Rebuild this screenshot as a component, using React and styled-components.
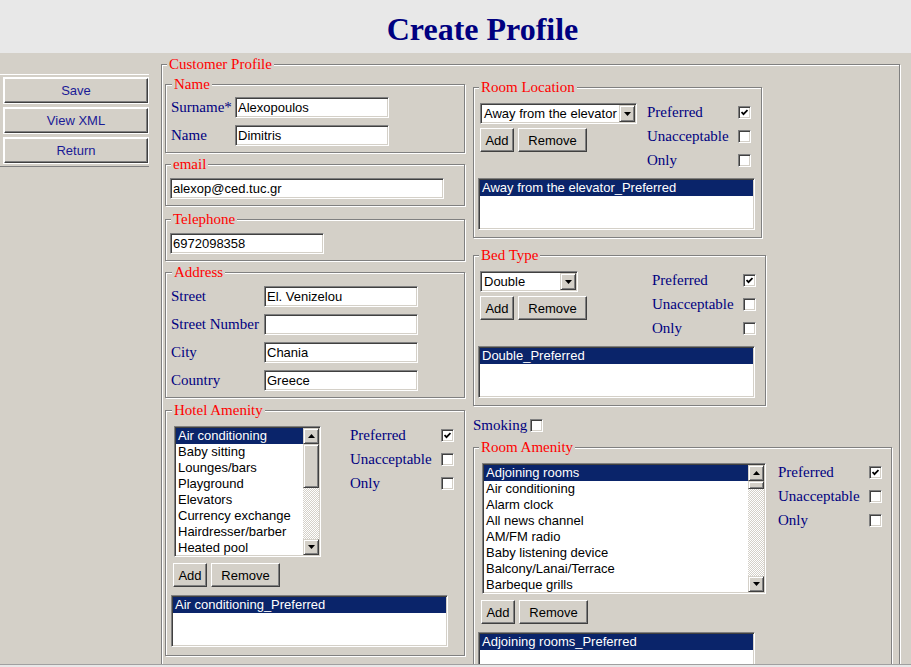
import React from 'react'
import styled, { createGlobalStyle } from 'styled-components'

const FACE = '#d4d0c8'
const SANS = '"Liberation Sans", Arial, sans-serif'
const SERIF = '"Liberation Serif", "Times New Roman", serif'

const GlobalStyle = createGlobalStyle`
  html, body {
    margin: 0;
    padding: 0;
  }
  body {
    background: #e8e8e8;
    font-family: ${SERIF};
  }
`

const Header = styled.header`
  height: 53px;
  box-sizing: border-box;
  padding: 11px 0 0 54px;
  background: #e8e8e8;
  text-align: center;
`

const Title = styled.h1`
  margin: 0;
  font: bold 32px/37px ${SERIF};
  color: #000080;
`

const Main = styled.main`
  display: flex;
  align-items: flex-start;
  height: 612px;
  box-sizing: border-box;
  background: ${FACE};
  border-bottom: 1px solid #a0a0a0;
  overflow: hidden;
`

const Sidebar = styled.nav`
  flex: none;
  width: 149px;
  box-sizing: border-box;
  margin-top: 21px;
  padding: 3px 1px 3px 4px;
  border-top: 1px solid #fff;
  border-bottom: 1px solid #808080;
  display: flex;
  flex-direction: column;
  gap: 5px;
`

const raised = `
  box-sizing: border-box;
  background: ${FACE};
  border: 1px solid;
  border-color: #fff #404040 #404040 #fff;
  box-shadow: inset -1px -1px 0 #808080;
`

const sunken = `
  box-sizing: border-box;
  background: #fff;
  border: 1px solid;
  border-color: #808080 #fff #fff #808080;
  box-shadow: inset 1px 1px 0 #404040, inset -1px -1px 0 ${FACE};
`

const SideButton = styled.button`
  ${raised}
  width: 144px;
  height: 25px;
  margin: 0;
  padding: 0;
  box-shadow: inset -1px -1px 0 #808080, 0 0 0 1px #fff;
  font: 13px ${SANS};
  color: #1a1a96;
`

const PushButton = styled.button`
  ${raised}
  width: ${p => p.$w}px;
  height: 24px;
  margin: 0;
  padding: 0;
  font: 13px ${SANS};
  color: #000;
`

const Profile = styled.fieldset`
  flex: none;
  width: 739px;
  min-width: 0;
  box-sizing: border-box;
  margin: 3px 0 0 12px;
  padding: 3px 0 0 3px;
  border: 1px solid #808080;
  box-shadow: inset 1px 1px 0 #fff, 1px 1px 0 #fff;
`

const Legend = styled.legend`
  margin-left: ${p => p.$ml ?? 1}px;
  padding: 0 2px;
  font: 15px/17px ${SERIF};
  color: #ff0000;
  background: ${FACE};
`

const Columns = styled.div`
  display: flex;
  align-items: flex-start;
`

const LeftColumn = styled.div`
  width: 300px;
  display: flex;
  flex-direction: column;
  gap: 3px;
`

const RightColumn = styled.div`
  margin: 3px 0 0 8px;
  display: flex;
  flex-direction: column;
  align-items: flex-start;
`

const Group = styled.fieldset`
  width: ${p => p.$w}px;
  min-width: 0;
  box-sizing: border-box;
  margin: ${p => p.$mt ?? 0}px 0 0;
  padding: ${p => p.$pt ?? 4}px ${p => p.$pr ?? 10}px ${p => p.$pb ?? 8}px ${p => p.$pl ?? 5}px;
  border: 1px solid #808080;
  box-shadow: inset 1px 1px 0 #fff, 1px 1px 0 #fff;
`

const FieldGrid = styled.div`
  display: grid;
  grid-template-columns: ${p => p.$label}px 154px;
  row-gap: 7px;
  align-items: center;
`

const Label = styled.label`
  font: 15px/17px ${SERIF};
  color: #000080;
  white-space: nowrap;
`

const TextBox = styled.input`
  ${sunken}
  width: ${p => p.$w ?? 154}px;
  height: 21px;
  margin: 0;
  padding: 0 2px;
  font: 13px ${SANS};
  color: #000;
  outline: none;
`

const ListFrame = styled.div`
  ${sunken}
  width: ${p => p.$w}px;
  height: ${p => p.$h}px;
  margin-left: ${p => p.$ml ?? 0}px;
  padding: 1px;
  display: flex;
  overflow: hidden;
`

const Items = styled.ul`
  flex: 1;
  min-width: 0;
  margin: 0;
  padding: 0;
  list-style: none;
  overflow: hidden;
`

const Item = styled.li`
  height: 16px;
  padding-left: 2px;
  font: 13px/16px ${SANS};
  white-space: nowrap;
  color: ${p => (p.$selected ? '#fff' : '#000')};
  background: ${p => (p.$selected ? '#0a246a' : 'transparent')};
`

const ScrollTrack = styled.div`
  flex: none;
  width: 16px;
  display: flex;
  flex-direction: column;
  background: repeating-conic-gradient(#fff 0 25%, ${FACE} 0 50%) 0 0 / 2px 2px;
`

const bevel = `
  box-sizing: border-box;
  background: ${FACE};
  border: 1px solid;
  border-color: ${FACE} #404040 #404040 ${FACE};
  box-shadow: inset 1px 1px 0 #fff, inset -1px -1px 0 #808080;
`

const ArrowButton = styled.div`
  ${bevel}
  flex: none;
  width: 16px;
  height: ${p => p.$h ?? 16}px;
  display: flex;
  align-items: center;
  justify-content: center;
`

const Thumb = styled.div`
  ${bevel}
  flex: none;
  height: ${p => p.$h}px;
`

const TrackGap = styled.div`
  flex: 1;
`

const Choices = styled.div`
  display: grid;
  grid-template-columns: 91px 13px;
  grid-auto-rows: 24px;
  align-items: center;
`

const Box = styled.span`
  ${sunken}
  width: 13px;
  height: 13px;
  display: inline-flex;
  align-items: center;
  justify-content: center;
`

const SelectBox = styled.div`
  ${sunken}
  width: ${p => p.$w}px;
  height: 21px;
  padding: 1px;
  display: flex;
`

const SelectText = styled.span`
  flex: 1;
  padding-left: 2px;
  font: 13px/17px ${SANS};
  color: #000;
  white-space: nowrap;
  overflow: hidden;
`

const TopRow = styled.div`
  display: flex;
  justify-content: space-between;
  align-items: flex-start;
`

const Controls = styled.div`
  margin: 3px 0 0 2px;
  display: flex;
  flex-direction: column;
  align-items: flex-start;
  gap: 4px;
`

const ButtonRow = styled.div`
  display: flex;
  gap: 4px;
  margin: ${p => p.$mt ?? 0}px 0 0 ${p => p.$ml ?? 0}px;
`

const Spaced = styled.div`
  margin-top: ${p => p.$mt}px;
`

const Inline = styled.div`
  margin-top: 11px;
  display: flex;
  align-items: center;
  gap: 3px;
`

const Arrow = ({ up }) => (
  <svg width="7" height="4" viewBox="0 0 7 4">
    <path d={up ? 'M3.5 0L7 4H0Z' : 'M0 0H7L3.5 4Z'} fill="#000" />
  </svg>
)

const Check = ({ checked }) => (
  <Box>
    {checked && (
      <svg width="7" height="7" viewBox="0 0 7 7">
        <polyline points="0.5,3 2.5,5.2 6.5,1" fill="none" stroke="#000" strokeWidth="1.8" />
      </svg>
    )}
  </Box>
)

const ChoiceList = () => (
  <Choices>
    <Label>Preferred</Label>
    <Check checked />
    <Label>Unacceptable</Label>
    <Check />
    <Label>Only</Label>
    <Check />
  </Choices>
)

const ListBox = ({ items, width, height, thumb, ml }) => (
  <ListFrame $w={width} $h={height} $ml={ml}>
    <Items>
      {items.map((it, i) => (
        <Item key={it} $selected={i === 0}>{it}</Item>
      ))}
    </Items>
    {thumb && (
      <ScrollTrack>
        <ArrowButton><Arrow up /></ArrowButton>
        <Thumb $h={thumb} />
        <TrackGap />
        <ArrowButton><Arrow /></ArrowButton>
      </ScrollTrack>
    )}
  </ListFrame>
)

const Chosen = ({ value, mt = 8 }) => (
  <Spaced $mt={mt}>
    <ListBox items={[value]} width={277} height={52} />
  </Spaced>
)

const AddRemove = ({ mt, ml }) => (
  <ButtonRow $mt={mt} $ml={ml}>
    <PushButton $w={34}>Add</PushButton>
    <PushButton $w={69}>Remove</PushButton>
  </ButtonRow>
)

const Dropdown = ({ value, width }) => (
  <SelectBox $w={width}>
    <SelectText>{value}</SelectText>
    <ArrowButton $h={17}><Arrow /></ArrowButton>
  </SelectBox>
)

const PickPane = ({ legend, value, width, selectWidth, pr }) => (
  <Group $w={width} $pl={4} $pr={pr} $pb={7}>
    <Legend>{legend}</Legend>
    <TopRow>
      <Controls>
        <Dropdown value={value} width={selectWidth} />
        <AddRemove />
      </Controls>
      <ChoiceList />
    </TopRow>
    <Chosen value={`${value}_Preferred`} mt={6} />
  </Group>
)

const AmenityPane = ({ legend, items, width, listWidth, thumb, pl, listMl, pr, mt }) => (
  <Group $w={width} $pl={pl} $pr={pr} $mt={mt}>
    <Legend>{legend}</Legend>
    <TopRow>
      <Spaced $mt={3}>
        <ListBox items={items} width={listWidth} height={131} thumb={thumb} ml={listMl} />
      </Spaced>
      <ChoiceList />
    </TopRow>
    <AddRemove mt={6} ml={listMl - 1} />
    <Chosen value={`${items[0]}_Preferred`} />
  </Group>
)

const hotelAmenities = [
  'Air conditioning',
  'Baby sitting',
  'Lounges/bars',
  'Playground',
  'Elevators',
  'Currency exchange',
  'Hairdresser/barber',
  'Heated pool',
]

const roomAmenities = [
  'Adjoining rooms',
  'Air conditioning',
  'Alarm clock',
  'All news channel',
  'AM/FM radio',
  'Baby listening device',
  'Balcony/Lanai/Terrace',
  'Barbeque grills',
]

const App = () => {
  return (
    <>
      <GlobalStyle />
      <Header>
        <Title>Create Profile</Title>
      </Header>
      <Main>
        <Sidebar>
          <SideButton>Save</SideButton>
          <SideButton>View XML</SideButton>
          <SideButton>Return</SideButton>
        </Sidebar>
        <Profile>
          <Legend $ml={2}>Customer Profile</Legend>
          <Columns>
            <LeftColumn>
              <Group $w={300} $pb={6}>
                <Legend>Name</Legend>
                <FieldGrid $label={64}>
                  <Label>Surname*</Label>
                  <TextBox defaultValue="Alexopoulos" />
                  <Label>Name</Label>
                  <TextBox defaultValue="Dimitris" />
                </FieldGrid>
              </Group>
              <Group $w={300} $pt={5} $pb={6} $pl={4}>
                <Legend>email</Legend>
                <TextBox $w={274} defaultValue="alexop@ced.tuc.gr" />
              </Group>
              <Group $w={300} $pt={5} $pb={6} $pl={4} $mt={2}>
                <Legend>Telephone</Legend>
                <TextBox defaultValue="6972098358" />
              </Group>
              <Group $w={300} $pt={5} $pb={6}>
                <Legend>Address</Legend>
                <FieldGrid $label={93}>
                  <Label>Street</Label>
                  <TextBox defaultValue="El. Venizelou" />
                  <Label>Street Number</Label>
                  <TextBox defaultValue="" />
                  <Label>City</Label>
                  <TextBox defaultValue="Chania" />
                  <Label>Country</Label>
                  <TextBox defaultValue="Greece" />
                </FieldGrid>
              </Group>
              <AmenityPane
                legend="Hotel Amenity"
                items={hotelAmenities}
                width={300}
                listWidth={147}
                thumb={44}
                pl={5}
                listMl={3}
                pr={10}
                mt={1}
              />
            </LeftColumn>
            <RightColumn>
              <PickPane legend="Room Location" value="Away from the elevator" width={289} selectWidth={157} pr={10} />
              <Spaced $mt={9}>
                <PickPane legend="Bed Type" value="Double" width={293} selectWidth={98} pr={9} />
              </Spaced>
              <Inline>
                <Label>Smoking</Label>
                <Check />
              </Inline>
              <AmenityPane
                legend="Room Amenity"
                items={roomAmenities}
                width={419}
                listWidth={284}
                thumb={8}
                pl={4}
                listMl={4}
                pr={9}
                mt={5}
              />
            </RightColumn>
          </Columns>
        </Profile>
      </Main>
    </>
  )
}

export default App
